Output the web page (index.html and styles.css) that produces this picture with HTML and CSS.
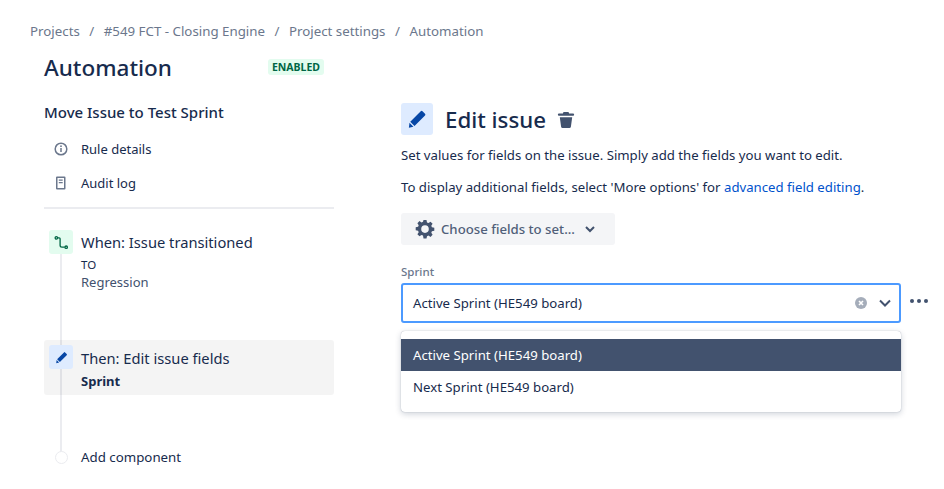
FILE: index.html
```html
<!DOCTYPE html>
<html lang="en">
<head>
<meta charset="utf-8">
<title>Automation</title>
<link rel="stylesheet" href="styles.css">
</head>
<body>
<nav class="crumbs"><span>Projects</span><i>/</i><span>#549 FCT - Closing Engine</span><i>/</i><span>Project settings</span><i>/</i><span>Automation</span></nav>
<div class="main">
  <aside class="left">
    <div class="title-row"><h1>Automation</h1><span class="lozenge">ENABLED</span></div>
    <h2>Move Issue to Test Sprint</h2>
    <div class="nav-item nav-first"><svg class="nav-icon" width="16" height="16" viewBox="0 0 16 16"><circle cx="8" cy="8" r="5.8" fill="none" stroke="#6b778c" stroke-width="1.5"/><rect x="7.25" y="7" width="1.5" height="4" fill="#6b778c"/><circle cx="8" cy="5.2" r=".9" fill="#6b778c"/></svg><span>Rule details</span></div>
    <div class="nav-item"><svg class="nav-icon" width="16" height="16" viewBox="0 0 16 16"><path fill-rule="evenodd" fill="#6b778c" d="M4 1.500h7.500a1 1 0 0 1 1 1v11a1 1 0 0 1-1 1H4a1 1 0 0 1-1-1v-11a1 1 0 0 1 1-1zm.5 1.500v10h6.500V3zM5.800 4.500h3.900v1.200H5.800zm0 2.500h3.900v1.200H5.800z"/></svg><span>Audit log</span></div>
    <hr class="rule">
    <div class="timeline">
      <div class="step step-when">
        <span class="badge badge-green"><svg width="15" height="15" viewBox="0 0 16 16" fill="none" stroke="#006644" stroke-width="1.400"><circle cx="2.500" cy="3" r="1.300"/><circle cx="13" cy="13" r="1.300"/><path d="M4 3H5.500a1 1 0 0 1 1 1v7a2 2 0 0 0 2 2h3"/></svg></span>
        <div class="step-text"><div class="step-name">When: Issue transitioned</div><div class="step-sub">TO</div><div class="step-sub step-reg">Regression</div></div>
      </div>
      <div class="step step-then">
        <span class="badge badge-blue"><svg width="13" height="13" viewBox="0 0 16 16"><path fill="#0747a6" d="M11 1.700a1 1 0 0 1 1.400 0l2 2a1 1 0 0 1 0 1.400L6 13.500l-3.400-3.400zM2 11l3.100 3.100L1.500 15z"/></svg></span>
        <div class="step-text step-text-then"><div class="step-name">Then: Edit issue fields</div><div class="step-bold">Sprint</div></div>
      </div>
      <div class="step step-add"><span class="dot"></span><span class="add-text">Add component</span></div>
    </div>
  </aside>
  <section class="right">
    <div class="edit-head">
      <span class="edit-badge"><svg width="20" height="20" viewBox="0 0 16 16"><path fill="#0747a6" d="M11 1.700a1 1 0 0 1 1.400 0l2 2a1 1 0 0 1 0 1.400L6 13.500l-3.400-3.400zM2 11l3.100 3.100L1.500 15z"/></svg></span>
      <h2 class="edit-title">Edit issue</h2>
      <svg class="trash" width="18" height="18" viewBox="0 0 18 18"><path fill="#42526e" d="M6.500 1h5l.6 1.500H16a.9.9 0 0 1 0 2.300H2a.9.9 0 0 1 0-2.300h3.900zM2.800 6.200h12.400l-1.300 9.600a1.500 1.500 0 0 1-1.500 1.200H5.600a1.500 1.500 0 0 1-1.500-1.200z"/></svg>
    </div>
    <p class="desc">Set values for fields on the issue. Simply add the fields you want to edit.</p>
    <p class="desc desc2">To display additional fields, select 'More options' for <a href="#">advanced field editing</a>.</p>
    <button class="choose" type="button">
      <svg width="20" height="20" viewBox="0 0 20 20"><path fill="#42526e" fill-rule="evenodd" d="M8.500 1h3l.5 2.400 1.500.6 2-1.300 2.100 2.100-1.300 2 .6 1.500 2.400.5v3l-2.400.5-.6 1.500 1.300 2-2.100 2.100-2-1.300-1.500.6-.5 2.400h-3L8 16.600l-1.500-.6-2 1.300-2.100-2.100 1.300-2-.6-1.500L.7 11.200v-3l2.400-.5.6-1.500-1.300-2 2.100-2.100 2 1.300L8 2.800zM10 6.300a3.800 3.800 0 1 0 0 7.600 3.800 3.800 0 0 0 0-7.600z"/></svg>
      <span>Choose fields to set...</span>
      <svg class="choose-caret" width="10" height="8" viewBox="0 0 10 8" fill="none" stroke="#42526e" stroke-width="2"><path d="M1 2l4 4 4-4"/></svg>
    </button>
    <label class="field-label">Sprint</label>
    <div class="field-row">
      <div class="select">
        <span class="select-value">Active Sprint (HE549 board)</span>
        <svg width="12" height="12" viewBox="0 0 12 12"><circle cx="6" cy="6" r="6" fill="#a5adba"/><path d="M4 4l4 4M8 4l-4 4" stroke="#fff" stroke-width="1.600"/></svg>
        <svg class="select-caret" width="12" height="8" viewBox="0 0 12 8" fill="none" stroke="#42526e" stroke-width="2"><path d="M1 1.500l5 5 5-5"/></svg>
      </div>
      <div class="more"><b></b><b></b><b></b></div>
    </div>
    <div class="menu">
      <div class="opt opt-on">Active Sprint (HE549 board)</div>
      <div class="opt">Next Sprint (HE549 board)</div>
    </div>
  </section>
</div>
</body>
</html>
```
FILE: styles.css
```css
* { box-sizing: border-box; }
html, body { margin: 0; height: 100%; }
body { width: 944px; height: 489px; overflow: hidden; background: #fff; color: #172b4d; font-family: "Noto Sans", "Open Sans", sans-serif; font-size: 13.2px; padding: 22px 0 0 30px; }
.crumbs { display: flex; gap: 9.5px; height: 18px; line-height: 18px; color: #6b778c; font-size: 13.3px; }
.crumbs i { font-style: normal; }
.main { display: flex; padding-left: 14px; }
.left { width: 290px; }
.title-row { display: flex; justify-content: space-between; padding: 12px 10px 0 0; height: 44px; }
h1 { margin: 0; font-size: 22.5px; font-weight: 500; line-height: 32px; }
.lozenge { align-self: flex-start; margin-top: 7px; height: 16px; line-height: 16px; padding: 0 4px; background: #e3fcef; color: #006644; border-radius: 3px; font-size: 10.5px; font-weight: 700; }
.left > h2 { margin: 18px 0 0; font-size: 15px; font-weight: 500; line-height: 20px; }
.nav-item { display: flex; align-items: center; height: 34px; padding-left: 9px; font-size: 13px; }
.nav-first { margin-top: 10px; }
.nav-icon { margin-right: 12px; }
.rule { margin: 7px 0 0; border: 0; height: 2px; background: #ebecf0; }
.timeline { position: relative; padding-top: 21px; }
.timeline::before { content: ""; position: absolute; left: 16px; top: 30px; bottom: 10px; width: 2px; background: #ebecf0; }
.step { position: relative; display: flex; padding-left: 5px; }
.step-when { height: 110px; }
.badge { flex: none; width: 24px; height: 24px; display: flex; align-items: center; justify-content: center; border-radius: 3px; margin-right: 8px; }
.badge-green { background: #e3fcef; }
.badge-blue { background: #deebff; }
.step-name { font-size: 14.7px; line-height: 24px; }
.step-sub { font-size: 11.5px; line-height: 18px; margin-top: 2px; }
.step-reg { margin-top: -1px; font-size: 13px; color: #42526e; }
.step-then { height: 55px; padding-top: 5px; background: rgba(0, 0, 0, .045); border-radius: 3px; }
.step-text-then { padding-top: 1px; }
.step-bold { font-weight: 700; font-size: 13px; line-height: 22px; }
.step-add { margin-top: 50px; height: 24px; align-items: center; }
.dot { flex: none; width: 13px; height: 13px; margin: 0 13px 0 6px; background: #fff; border: 1.5px solid #ebecf0; border-radius: 50%; }
.add-text { font-size: 13.3px; }
.right { margin-left: 67px; width: 528px; padding-top: 63px; }
.edit-head { display: flex; align-items: center; height: 32px; }
.edit-badge { width: 32px; height: 32px; display: flex; align-items: center; justify-content: center; background: #deebff; border-radius: 3px; margin-right: 12px; }
.edit-title { margin: 2px 0 0; font-size: 22.3px; font-weight: 500; line-height: 32px; }
.trash { margin-left: 11px; margin-top: 1px; }
.desc { margin: 11px 0 0; line-height: 18px; }
.desc2 { margin-top: 14px; }
a { color: #0052cc; text-decoration: none; }
.choose { display: flex; align-items: center; width: 214px; height: 32px; margin-top: 17px; padding: 0 14px; border: 0; border-radius: 3px; background: #f4f5f7; color: #505f79; font: 500 13.2px "Noto Sans", sans-serif; }
.choose span { margin-left: 6px; }
.choose-caret { margin-left: 10px; }
.field-label { display: block; margin-top: 19px; color: #6b778c; font-size: 11.5px; font-weight: 500; line-height: 16px; }
.field-row { display: flex; align-items: center; margin-top: 3px; }
.select { display: flex; align-items: center; width: 500px; height: 40px; padding: 0 8px 0 10px; border: 2px solid #4c9aff; border-radius: 3px; }
.select-value { flex: 1; }
.select-caret { margin-left: 12px; }
.more { display: flex; gap: 3px; margin: -5px 0 0 9px; }
.more b { width: 4px; height: 4px; background: #42526e; border-radius: 50%; }
.menu { width: 500px; height: 81px; margin-top: 8px; padding-top: 8px; border-radius: 4px; background: #fff; box-shadow: 0 0 1px rgba(9,30,66,.4), 0 2px 6px rgba(9,30,66,.2); }
.opt { height: 32px; line-height: 32px; padding-left: 12px; }
.opt-on { background: #42526e; color: #fff; }
```
